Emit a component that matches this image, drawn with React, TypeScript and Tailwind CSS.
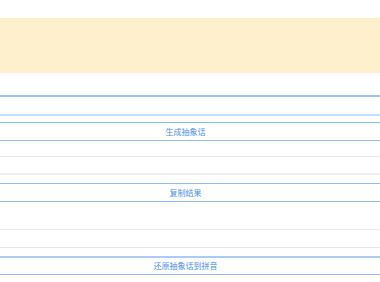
export default function App() {
  const font = { fontFamily: '"Noto Sans CJK SC", "Noto Sans", sans-serif' };
  return (
    <div className="w-[380px] h-[282px] bg-white overflow-hidden flex flex-col" style={font}>
      <div className="mt-[18px] h-[55px] bg-[#fef0cd]" />
      <div className="mt-[22px] h-[21px] border-t-2 border-b-2 border-t-[#9cc6f7] border-b-[#c6def9]" />
      <div className="mt-[6px] h-[19px] pr-[9px] border-y border-[#8dbcf4] flex items-center justify-center text-[8px] leading-none text-[#4d8ef0]">
        生成抽象话
      </div>
      <div className="mt-[15px] h-[19px] border-t border-b-2 border-t-[#e5e7eb] border-b-[#efefef]" />
      <div className="mt-[8px] h-[19px] pr-[9px] border-y border-[#8dbcf4] flex items-center justify-center text-[8px] leading-none text-[#4d8ef0]">
        复制结果
      </div>
      <div className="mt-[27px] h-[19px] border-t border-b border-t-[#e5e7eb] border-b-[#e5e7eb]" />
      <div className="mt-[8px] h-[19px] pr-[9px] border-t-2 border-b border-t-[#a9cdf7] border-b-[#8dbcf4] flex items-center justify-center text-[8px] leading-none text-[#4d8ef0]">
        还原抽象话到拼音
      </div>
    </div>
  );
}
